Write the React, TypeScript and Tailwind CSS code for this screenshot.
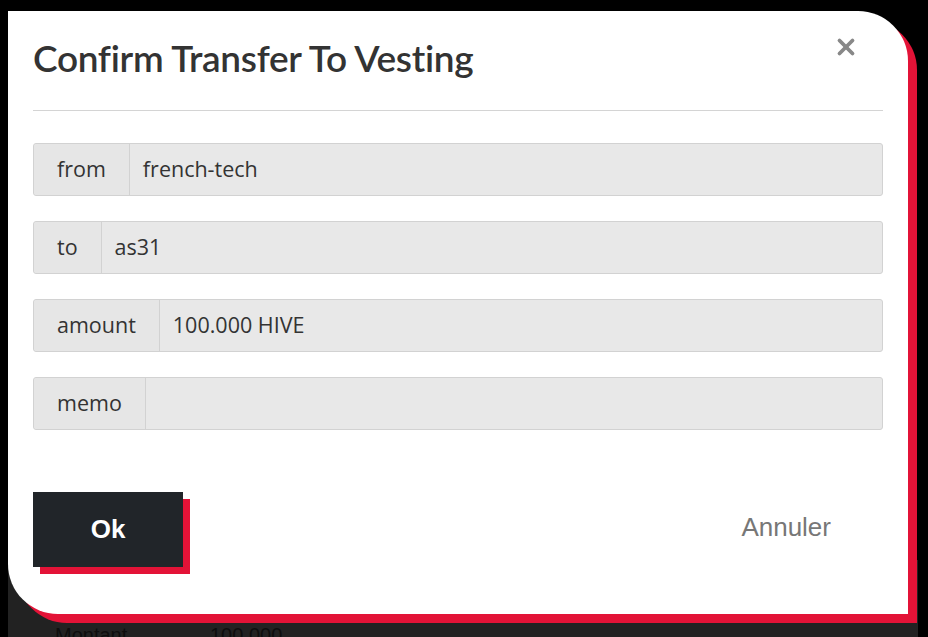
import { X } from "lucide-react";

const fields = [
  { label: "from", value: "french-tech" },
  { label: "to", value: "as31" },
  { label: "amount", value: "100.000 HIVE" },
  { label: "memo", value: "" },
];

export default function App() {
  return (
    <div className="relative w-[928px] h-[637px] overflow-hidden bg-black">
      {/* page behind the overlay */}
      <div className="absolute left-[8px] right-[10px] top-[560px] bottom-0 bg-[#222222]">
        <div className="flex pl-[47px] pt-[60px] text-[20px] text-[#0e0e0e] font-['Liberation_Sans',sans-serif]">
          <span className="w-[155px]">Montant</span>
          <span>100.000</span>
        </div>
      </div>

      <div className="relative z-10 pt-[11px] pl-[8px]">
        <div className="w-[900px] h-[603px] bg-white rounded-tr-[50px] rounded-bl-[50px] shadow-[9px_9px_0_#e31337] px-[25px] flex flex-col">
          {/* header */}
          <div className="h-[100px] border-b border-[#d4d4d4] flex items-start justify-between">
            <h1 className="mt-[19px] text-[37px] font-semibold text-[#333] tracking-[-0.3px] font-['Lato',sans-serif]">
              Confirm Transfer To Vesting
            </h1>
            <button className="mt-[23px] mr-[24px] text-[#888]">
              <X size={26} strokeWidth={3.5} />
            </button>
          </div>

          {/* fields */}
          <div className="mt-[32px] flex flex-col gap-[25px] font-['Open_Sans',sans-serif] text-[21.5px] text-[#333]">
            {fields.map((f) => (
              <div key={f.label} className="flex h-[53px] border border-[#d2d2d2] rounded-[3px] bg-[#e8e8e8]">
                <div className="flex items-center px-[23px] border-r border-[#d2d2d2] bg-[#e6e6e6] rounded-l-[3px]">
                  {f.label}
                </div>
                <div className="flex-1 flex items-center px-[13px]">{f.value}</div>
              </div>
            ))}
          </div>

          {/* actions */}
          <div className="mt-[62px] flex items-center justify-between pr-[52px]">
            <button className="w-[150px] h-[75px] bg-[#212529] text-white text-[26px] font-bold shadow-[7px_7px_0_#e31337] font-['Liberation_Sans',sans-serif]">
              Ok
            </button>
            <button className="-mt-[4px] text-[26px] text-[#777] font-['Liberation_Sans',sans-serif]">
              Annuler
            </button>
          </div>
        </div>
      </div>
    </div>
  );
}
